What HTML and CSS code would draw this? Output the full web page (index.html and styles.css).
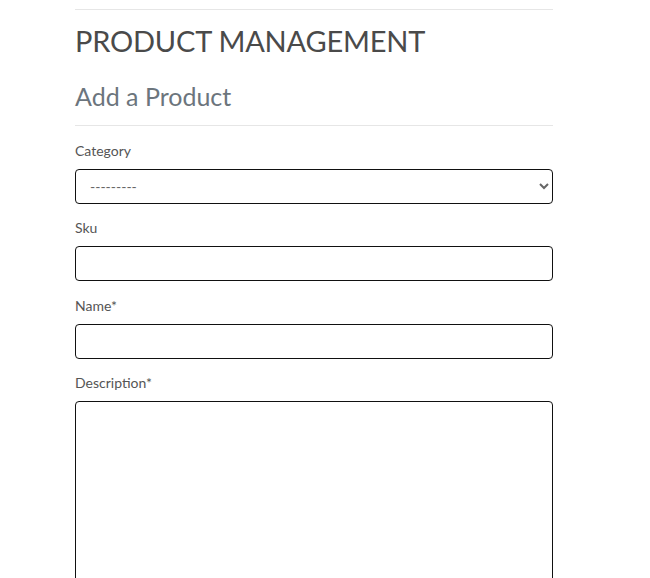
FILE: index.html
```html
<!DOCTYPE html>
<html>
<head>
<meta charset="utf-8">
<link rel="stylesheet" href="styles.css">
</head>
<body>
<div class="container">
  <hr class="rule">
  <h2 class="title">PRODUCT MANAGEMENT</h2>
  <h5 class="subtitle">Add a Product</h5>
  <hr class="rule rule-sub">
  <form class="form">
    <div class="group">
      <label class="label" for="cat">Category</label>
      <select id="cat" class="control select">
        <option>---------</option>
      </select>
    </div>
    <div class="group">
      <label class="label" for="sku">Sku</label>
      <input id="sku" class="control" type="text">
    </div>
    <div class="group">
      <label class="label" for="name">Name*</label>
      <input id="name" class="control" type="text">
    </div>
    <div class="group">
      <label class="label" for="desc">Description*</label>
      <textarea id="desc" class="control area"></textarea>
    </div>
  </form>
</div>
</body>
</html>
```

FILE: styles.css
```css
html, body {
  margin: 0;
  padding: 0;
  background: #fff;
}
body {
  font-family: Lato, "Open Sans", sans-serif;
  color: #555;
}
.container {
  width: 478px;
  margin-left: 75px;
  padding-top: 9px;
}
.rule {
  border: 0;
  border-top: 1px solid #e6e6e6;
  margin: 0;
}
.title {
  margin: 14px 0 0;
  font-size: 29px;
  line-height: 1.2;
  font-weight: 400;
  letter-spacing: -0.2px;
  color: #4a4a4a;
}
.subtitle {
  margin: 22px 0 0;
  font-size: 25px;
  line-height: 1.2;
  font-weight: 400;
  color: #6c757d;
}
.rule-sub {
  margin-top: 14px;
}
.form {
  padding-top: 14px;
}
.group {
  margin-bottom: 13.5px;
}
.label {
  display: block;
  font-size: 14px;
  line-height: 22px;
  margin-bottom: 7px;
  color: #555;
}
.control {
  display: block;
  box-sizing: border-box;
  width: 100%;
  height: 35px;
  border: 1px solid #111;
  border-radius: 4px;
  font-family: Lato, sans-serif;
  font-size: 14px;
  padding: 6px 12px;
  background: #fff;
  color: #666;
  margin: 0;
}
.select {
  padding-left: 10px;
}
.area {
  height: 240px;
  resize: none;
}
```
